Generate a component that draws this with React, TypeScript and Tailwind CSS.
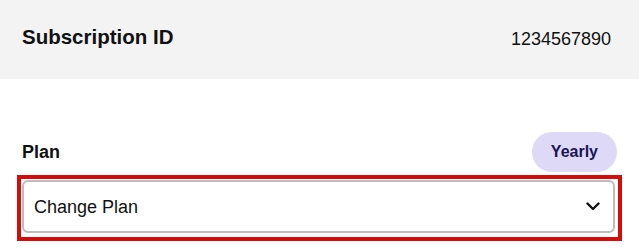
import { useState } from "react";

// Subscription summary with plan selector
export default function App() {
  const [plan] = useState("Yearly");

  return (
    <div
      className="w-[639px] h-[252px] bg-white text-[#111] overflow-hidden"
      style={{ fontFamily: '"Liberation Sans", Arial, sans-serif' }}
    >
      <div className="h-[79px] bg-[#f3f3f3] pl-[22px] pr-[28px] pt-[27px] flex items-start justify-between">
        <span className="text-[20.5px] leading-none font-bold">Subscription ID</span>
        <span className="text-[18px] leading-none mt-[3px]">1234567890</span>
      </div>

      <div className="mt-[53px] px-[22px] flex items-center justify-between">
        <span className="text-[18px] leading-none font-bold">Plan</span>
        <span className="h-10 px-[19px] rounded-full bg-[#ddd9f6] text-[#1b1452] text-[16px] font-bold flex items-center">
          {plan}
        </span>
      </div>

      <div className="mx-[17px] mt-[3px] border-4 border-[#d80b0b] pl-px pt-px pr-[3px] pb-[4px]">
        <button className="w-full h-[53px] border-2 border-[#bcbcbc] rounded-[6px] pl-[10px] pr-[13px] flex items-center justify-between bg-white">
          <span className="text-[18px] leading-none">Change Plan</span>
          <svg width="14" height="9" viewBox="0 0 14 9" fill="none">
            <path
              d="M1.5 1.5 7 7l5.5-5.5"
              stroke="#111"
              strokeWidth="2.4"
              strokeLinecap="round"
              strokeLinejoin="round"
            />
          </svg>
        </button>
      </div>
    </div>
  );
}
